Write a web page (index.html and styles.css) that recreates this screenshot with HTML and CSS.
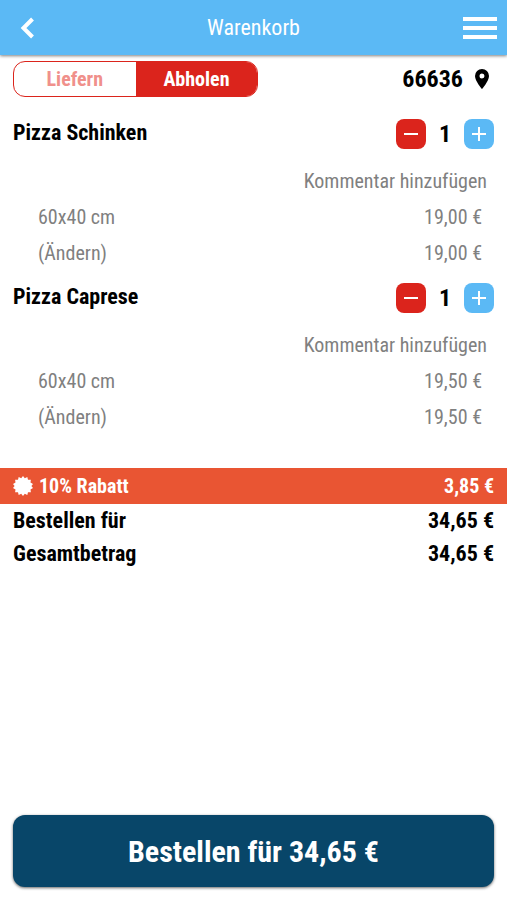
FILE: index.html
```html
<!DOCTYPE html>
<html lang="de">
<head>
    <meta charset="UTF-8">
    <meta name="viewport" content="width=device-width, initial-scale=1.0">
    <title>Warenkorb</title>
    <link rel="stylesheet" href="styles.css">
</head>
<body>

    <header class="topbar">
        <button class="icon-btn" type="button" aria-label="Zurück">
            <svg width="14" height="22" viewBox="0 0 14 22"><path d="M12.500 2 3.500 11l9 9" fill="none" stroke="#fff" stroke-width="4"/></svg>
        </button>
        <h1 class="topbar-title">Warenkorb</h1>
        <button class="icon-btn" type="button" aria-label="Menü">
            <svg width="34" height="24" viewBox="0 0 34 24"><path d="M0 3h34M0 12h34M0 21h34" stroke="#fff" stroke-width="4"/></svg>
        </button>
    </header>

    <main class="cart">
        <div class="delivery">
            <div class="toggle">
                <button class="toggle-btn" type="button">Liefern</button>
                <button class="toggle-btn active" type="button" aria-pressed="true">Abholen</button>
            </div>
            <a class="location" href="#">66636
                <svg width="14" height="20" viewBox="0 0 14 20"><path d="M7 0a7 7 0 0 0-7 7c0 5 7 13 7 13s7-8 7-13a7 7 0 0 0-7-7zm0 9.500a2.500 2.500 0 1 1 0-5 2.500 2.500 0 0 1 0 5z"/></svg>
            </a>
        </div>

        <section class="item">
            <div class="item-head">
                <h2 class="item-name">Pizza Schinken</h2>
                <div class="stepper">
                    <button class="step minus" type="button" aria-label="Weniger">
                        <svg width="14" height="14" viewBox="0 0 14 14"><path d="M0 7h14" stroke="#fff" stroke-width="2"/></svg>
                    </button>
                    <span class="count">1</span>
                    <button class="step plus" type="button" aria-label="Mehr">
                        <svg width="14" height="14" viewBox="0 0 14 14"><path d="M0 7h14M7 0v14" stroke="#fff" stroke-width="2"/></svg>
                    </button>
                </div>
            </div>
            <button class="comment" type="button">Kommentar hinzufügen</button>
            <div class="item-row"><span>60x40 cm</span><span>19,00 €</span></div>
            <div class="item-row"><a href="#">(Ändern)</a><span>19,00 €</span></div>
        </section>

        <section class="item">
            <div class="item-head">
                <h2 class="item-name">Pizza Caprese</h2>
                <div class="stepper">
                    <button class="step minus" type="button" aria-label="Weniger">
                        <svg width="14" height="14" viewBox="0 0 14 14"><path d="M0 7h14" stroke="#fff" stroke-width="2"/></svg>
                    </button>
                    <span class="count">1</span>
                    <button class="step plus" type="button" aria-label="Mehr">
                        <svg width="14" height="14" viewBox="0 0 14 14"><path d="M0 7h14M7 0v14" stroke="#fff" stroke-width="2"/></svg>
                    </button>
                </div>
            </div>
            <button class="comment" type="button">Kommentar hinzufügen</button>
            <div class="item-row"><span>60x40 cm</span><span>19,50 €</span></div>
            <div class="item-row"><a href="#">(Ändern)</a><span>19,50 €</span></div>
        </section>

        <div class="discount">
            <svg width="20" height="20" viewBox="0 0 20 20"><path fill="#fff" d="M10 0l1.800 2.300L14.300 1l.7 2.800 2.900-.1-.4 2.900 2.500 1.500L18.400 10l1.600 2-2.500 1.400.4 2.900-2.900-.1-.7 2.800-2.500-1.300L10 20l-1.800-2.300L5.700 19 5 16.200l-2.900.1.400-2.900L0 12l1.600-2L0 8.100l2.500-1.500-.4-2.900 2.900.1L5.700 1l2.500 1.300z"/></svg>
            <span>10% Rabatt</span>
            <span class="discount-value">3,85 €</span>
        </div>

        <div class="total"><span>Bestellen für</span><span>34,65 €</span></div>
        <div class="total"><span>Gesamtbetrag</span><span>34,65 €</span></div>
    </main>

    <footer class="footer">
        <button class="order" type="button">Bestellen für 34,65 €</button>
    </footer>

</body>
</html>
```
FILE: styles.css
```css
* {
    box-sizing: border-box;
}

body {
    display: flex;
    flex-direction: column;
    min-height: 100vh;
    margin: 0;
    background-color: #fff;
    color: #000;
    font-family: "Roboto Condensed", Roboto, sans-serif;
    font-size: 20px;
}

button {
    border: 0;
    padding: 0;
    background: none;
    color: inherit;
    font: inherit;
    cursor: pointer;
}

a {
    color: inherit;
    text-decoration: none;
}

svg {
    display: block;
}

/* Top bar */
.topbar {
    display: grid;
    grid-template-columns: 1fr auto 1fr;
    align-items: center;
    height: 55px;
    padding: 0 10px;
    background-color: #5bb9f5;
    box-shadow: 0 1px 3px rgba(0, 0, 0, 0.5);
    color: #fff;
}

.topbar-title {
    margin: 0;
    font-size: 22px;
    font-weight: 400;
}

.icon-btn:first-child {
    justify-self: start;
    padding: 0 10px;
}

.icon-btn:last-child {
    justify-self: end;
}

/* Delivery or pickup */
.delivery {
    display: flex;
    justify-content: space-between;
    align-items: center;
    padding: 6px 13px 0;
}

.toggle {
    display: grid;
    grid-template-columns: 1fr 1fr;
    width: 51%;
    height: 36px;
    border: 1px solid #db241c;
    border-radius: 12px;
    overflow: hidden;
    color: #f0908b;
    font-weight: 700;
}

.toggle-btn.active {
    background-color: #db241c;
    color: #fff;
}

.location {
    display: flex;
    align-items: center;
    gap: 12px;
    padding-right: 5px;
    font-size: 24px;
    font-weight: 700;
}

/* Cart items */
.item {
    padding: 22px 13px 0;
}

.item + .item {
    padding-top: 12px;
}

.item-head {
    display: flex;
    justify-content: space-between;
    height: 30px;
}

.item-name {
    margin: 0;
    font-size: 22px;
    line-height: 28px;
}

.stepper {
    display: grid;
    grid-template-columns: 30px 38px 30px;
    align-items: center;
    text-align: center;
}

.step {
    display: flex;
    justify-content: center;
    align-items: center;
    height: 30px;
    border-radius: 8px;
}

.minus {
    background-color: #db241c;
}

.plus {
    background-color: #5bb9f5;
}

.count {
    font-size: 24px;
    font-weight: 700;
}

.comment {
    display: block;
    margin: 14px 7px 0 auto;
    color: #808080;
    line-height: 36px;
}

.item-row {
    display: flex;
    justify-content: space-between;
    padding: 0 12px 0 25px;
    color: #808080;
    line-height: 36px;
}

/* Discount and totals */
.discount {
    display: flex;
    align-items: center;
    gap: 6px;
    height: 36px;
    margin-top: 33px;
    padding: 0 13px;
    background-color: #e95533;
    color: #fff;
    font-weight: 700;
}

.discount-value {
    margin-left: auto;
}

.total {
    display: flex;
    justify-content: space-between;
    padding: 0 13px;
    font-size: 22px;
    font-weight: 700;
    line-height: 33px;
}

/* Order button */
.footer {
    margin-top: auto;
    padding: 13px;
}

.order {
    width: 100%;
    height: 72px;
    border-radius: 12px;
    background-color: #084669;
    box-shadow: 0 1px 3px rgba(0, 0, 0, 0.6);
    color: #fff;
    font-size: 30px;
    font-weight: 700;
}
```
